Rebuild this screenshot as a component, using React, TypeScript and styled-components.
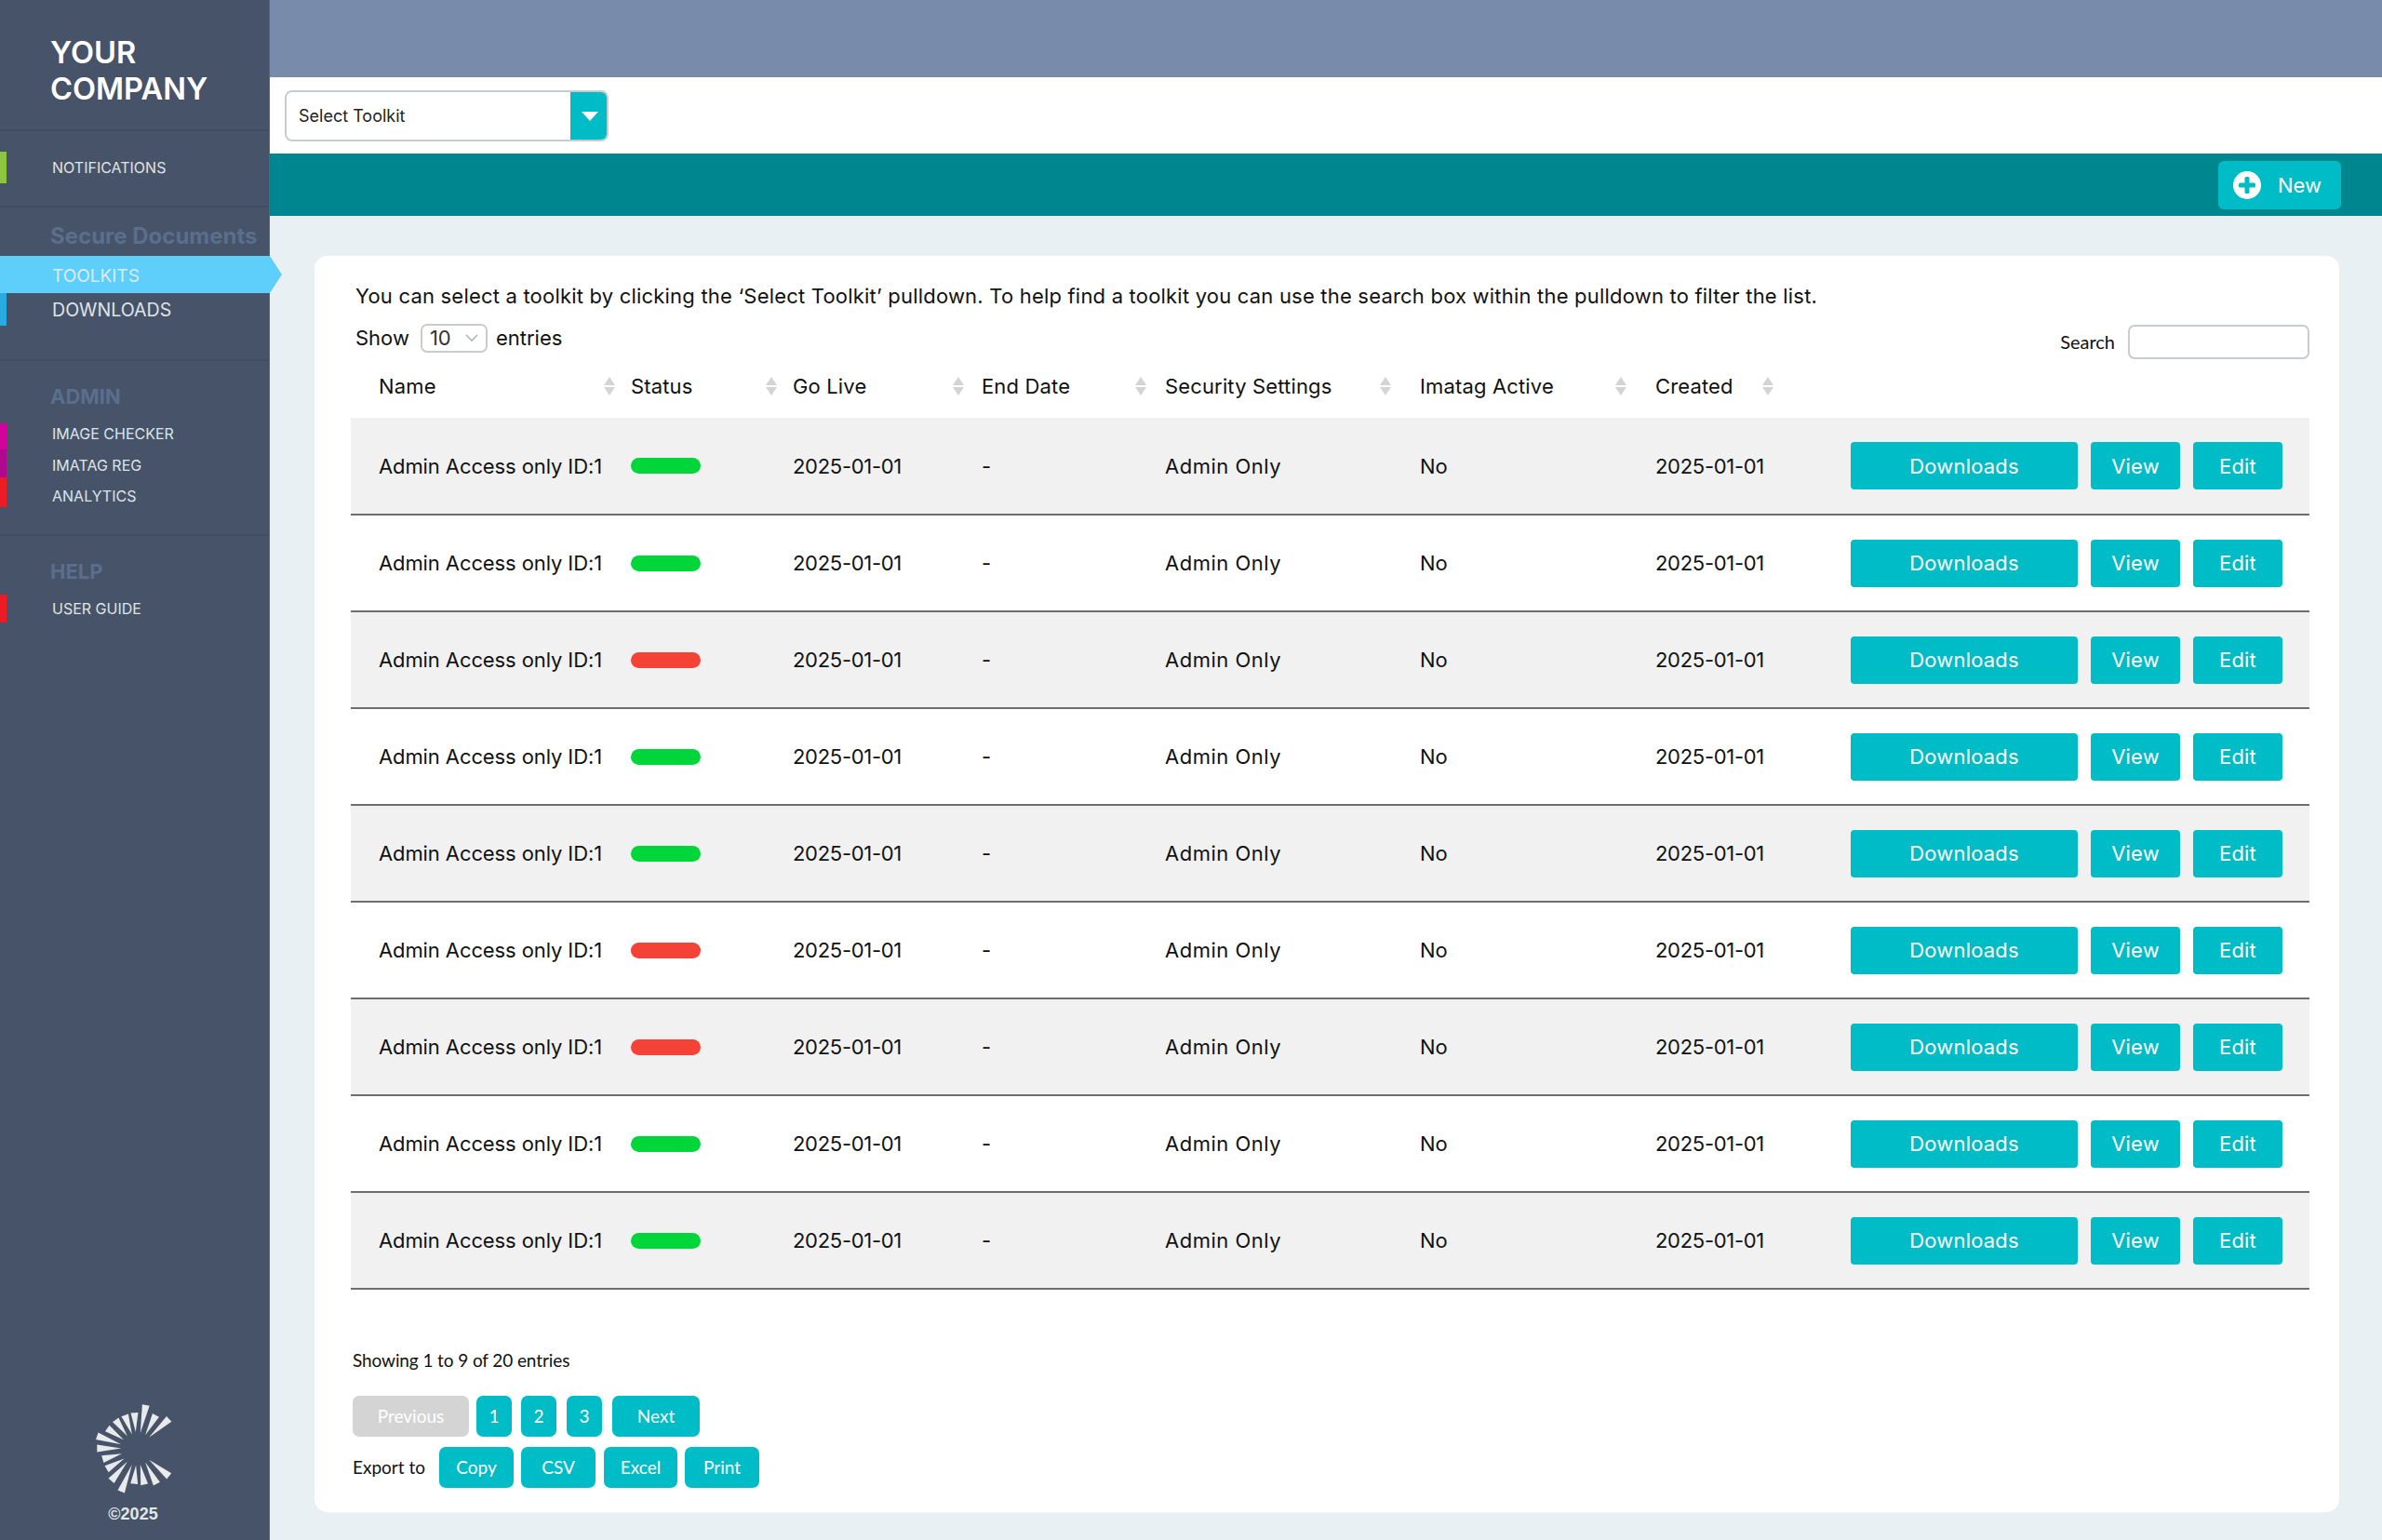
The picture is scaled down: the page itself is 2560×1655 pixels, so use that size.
import React from 'react';
import styled, { createGlobalStyle } from 'styled-components';

const Global = createGlobalStyle`
  html, body { margin: 0; padding: 0; }
  body { font-family: Inter, "Noto Sans", sans-serif; color: #111; background: #e8f0f4; }
  * { box-sizing: border-box; }
`;

const TEAL = '#00bcc6';

const Shell = styled.div`
  display: grid;
  grid-template-columns: 290px 1fr;
  height: 1655px;
  overflow: hidden;
`;

const Sidebar = styled.aside`
  display: flex;
  flex-direction: column;
  background: #465368;
  color: #dfe4ea;
  position: relative;
  z-index: 2;
  border-right: 1px solid #55647e;
`;

const Brand = styled.div`
  height: 141px;
  padding: 37px 0 0 54px;
  font-family: Inter, sans-serif;
  font-weight: 600;
  font-size: 32.6px;
  line-height: 39px;
  color: #fff;
  border-bottom: 2px solid #414d61;
`;

const NavSection = styled.nav<{ $pad: number; $h: number }>`
  height: ${p => p.$h}px;
  padding-top: ${p => p.$pad}px;
  border-bottom: 2px solid #414d61;
`;

const NavHeading = styled.div<{ $gap: number; $size?: number }>`
  height: 30px;
  line-height: 30px;
  padding-left: 54px;
  margin-bottom: ${p => p.$gap}px;
  font-size: ${p => p.$size ?? 24}px;
  font-weight: 700;
  color: #5a6e8d;
  white-space: nowrap;
`;

const NavItem = styled.a<{ $accent?: string; $h: number; $big?: boolean; $top?: number; $bottom?: number }>`
  display: flex;
  align-items: center;
  height: ${p => p.$h}px;
  padding: ${p => p.$top ?? 0}px 0 ${p => p.$bottom ?? 0}px ${p => (p.$accent ? 49 : 56)}px;
  border-left: ${p => (p.$accent ? `7px solid ${p.$accent}` : 'none')};
  font-size: ${p => (p.$big ? 19.6 : 16)}px;
  color: #dfe4ea;
`;

const ActiveItem = styled.a`
  display: flex;
  align-items: center;
  height: 40px;
  width: 290px;
  padding: 2px 0 0 56px;
  position: relative;
  background: #5dcffa;
  color: #dcebf2;
  font-size: 19px;
  &::after {
    content: '';
    position: absolute;
    left: 290px;
    top: 0;
    border-left: 13px solid #5dcffa;
    border-top: 20px solid transparent;
    border-bottom: 20px solid transparent;
  }
`;

const SideFoot = styled.div`
  margin-top: auto;
  padding: 0 3px 18px 0;
  display: flex;
  flex-direction: column;
  align-items: center;
  gap: 9px;
`;

const Copy = styled.div`
  font-family: "Liberation Sans", sans-serif;
  font-weight: 700;
  font-size: 18px;
  line-height: 20px;
  color: #e4e6e8;
`;

const Main = styled.main`
  display: flex;
  flex-direction: column;
  min-width: 0;
`;

const TopBar = styled.div`
  height: 83px;
  background: #788bab;
`;

const ToolkitBar = styled.div`
  height: 82px;
  background: #fff;
  padding: 14px 0 0 16px;
`;

const ToolkitSelect = styled.div`
  display: flex;
  width: 348px;
  height: 55px;
  border: 2px solid #c9cccf;
  border-radius: 8px;
  overflow: hidden;
`;

const ToolkitLabel = styled.div`
  flex: 1;
  display: flex;
  align-items: center;
  padding-left: 13px;
  font-size: 18px;
  color: #222;
`;

const ToolkitCaret = styled.div`
  width: 41px;
  margin: -2px -2px -2px 0;
  background: ${TEAL};
  display: flex;
  align-items: center;
  justify-content: center;
  &::before {
    content: '';
    border-top: 10px solid #fff;
    border-left: 9px solid transparent;
    border-right: 9px solid transparent;
  }
`;

const ActionBar = styled.div`
  height: 67px;
  background: #00868e;
  display: flex;
  justify-content: flex-end;
  align-items: center;
  padding-right: 44px;
`;

const NewButton = styled.button`
  width: 132px;
  height: 52px;
  border: 0;
  border-radius: 6px;
  background: ${TEAL};
  color: #fff;
  font: 400 22px Inter, sans-serif;
  display: flex;
  align-items: center;
  gap: 18px;
  padding: 0 0 0 16px;
`;

const Content = styled.div`
  flex: 1;
  display: flex;
  padding: 43px 46px 30px 48px;
  min-height: 0;
`;

const Card = styled.section`
  flex: 1;
  min-width: 0;
  background: #fff;
  border-radius: 14px;
  padding: 27px 32px 0 39px;
`;

const Intro = styled.p`
  margin: 0;
  height: 32px;
  line-height: 32px;
  padding-left: 5px;
  font-size: 22px;
  letter-spacing: 0.2px;
  white-space: nowrap;
  color: #111;
`;

const Controls = styled.div`
  display: flex;
  justify-content: space-between;
  align-items: flex-start;
  margin-top: 13px;
  height: 38px;
  padding-left: 5px;
`;

const Length = styled.div`
  display: flex;
  align-items: center;
  height: 31px;
  font-size: 22px;
  & > div { margin: 1px 9px 0 12px; }
`;

const LengthSelect = styled.div`
  width: 72px;
  height: 31px;
  border: 2px solid #c9cccf;
  border-radius: 7px;
  padding: 0 8px;
  display: flex;
  align-items: center;
  justify-content: space-between;
  font-size: 22px;
  color: #333;
`;

const SearchBox = styled.label`
  display: flex;
  align-items: center;
  gap: 14px;
  margin-top: 1px;
  font-family: Lato, sans-serif;
  font-size: 20px;
  & > input { margin-top: 1px; }
  line-height: 33px;
`;

const SearchInput = styled.input`
  width: 195px;
  height: 37px;
  border: 2px solid #c9cccf;
  border-radius: 7px;
  background: #fff;
`;

const Table = styled.table`
  width: 100%;
  table-layout: fixed;
  border-collapse: collapse;
  font-size: 22px;
`;

const HeadRow = styled.tr`
  height: 64px;
`;

const Th = styled.th`
  padding: 0 0 4px;
  font-weight: 400;
  text-align: left;
  letter-spacing: 0.15px;
`;

const ThInner = styled.div<{ $gutter: number; $inset?: number }>`
  display: flex;
  align-items: center;
  justify-content: space-between;
  padding-left: ${p => p.$inset ?? 0}px;
  padding-right: ${p => p.$gutter}px;
`;

const Row = styled.tr<{ $shade: boolean }>`
  height: 104px;
  background: ${p => (p.$shade ? '#f1f1f1' : '#fff')};
  border-bottom: 2px solid #6f6f6f;
`;

const Td = styled.td<{ $inset?: number; $track?: number }>`
  padding: 0 0 0 ${p => p.$inset ?? 0}px;
  letter-spacing: ${p => p.$track ?? 0}px;
  white-space: nowrap;
`;

const Pill = styled.span<{ $on: boolean }>`
  display: block;
  width: 75px;
  height: 17px;
  border-radius: 9px;
  background: ${p => (p.$on ? '#00d639' : '#f44336')};
`;

const RowActions = styled.div`
  display: flex;
  gap: 14px;
`;

const RowButton = styled.button<{ $w: number }>`
  width: ${p => p.$w}px;
  height: 51px;
  border: 0;
  border-radius: 4px;
  background: ${TEAL};
  color: #fff;
  font: 400 22px Inter, sans-serif;
  letter-spacing: 0.2px;
`;

const Info = styled.div`
  margin: 62px 0 0 2px;
  line-height: 28px;
  font-family: Lato, sans-serif;
  font-size: 19px;
  letter-spacing: -0.1px;
`;

const ButtonRow = styled.div<{ $top: number }>`
  display: flex;
  align-items: center;
  margin: ${p => p.$top}px 0 0 2px;
`;

const PageButton = styled.button<{ $w: number; $off?: boolean; $gap?: number }>`
  width: ${p => p.$w}px;
  height: 44px;
  margin-right: ${p => p.$gap ?? 10}px;
  border: 0;
  border-radius: 7px;
  background: ${p => (p.$off ? '#d4d4d4' : TEAL)};
  color: #fff;
  font: 400 19px Lato, sans-serif;
  padding: 0 0 2px;
`;

const ExportLabel = styled.span`
  width: 93px;
  font-family: Lato, sans-serif;
  font-size: 19px;
  padding-bottom: 2px;
`;

const HelpSection = styled.nav`
  padding-top: 23px;
`;

const wedges: number[][] = [
  [305, 100, 240, 160], [262, 88, 228, 152], [230, 55, 212, 145], [193, 80, 197, 142],
  [162, 88, 185, 150], [132, 103, 170, 155], [105, 130, 158, 167], [72, 155, 150, 182],
  [72, 195, 150, 195], [90, 230, 152, 212], [103, 262, 160, 228], [118, 300, 170, 238],
  [150, 335, 185, 248], [192, 310, 198, 250], [225, 312, 212, 248], [265, 310, 228, 240],
  [305, 285, 240, 232],
];

const wedgePoints = ([ox, oy, ix, iy]: number[]) => {
  const dx = ox - ix;
  const dy = oy - iy;
  const len = Math.hypot(dx, dy);
  const nx = (-dy / len) * 12;
  const ny = (dx / len) * 12;
  return `${ix},${iy} ${ox + nx},${oy + ny} ${ox - nx},${oy - ny}`;
};

const Logo = () => (
  <svg width="95" height="103" viewBox="47 40 286 310" fill="#e9eaeb">
    {wedges.map((w, i) => <polygon key={i} points={wedgePoints(w)} />)}
  </svg>
);

const PlusCircle = () => (
  <svg width="30" height="30" viewBox="0 0 30 30">
    <circle cx="15" cy="15" r="15" fill="#fff" />
    <rect x="12.5" y="6" width="5" height="18" rx="1.5" fill={TEAL} />
    <rect x="6" y="12.5" width="18" height="5" rx="1.5" fill={TEAL} />
  </svg>
);

const SortIcon = () => (
  <svg width="12" height="20" viewBox="0 0 12 20" fill="#d4d4d4">
    <path d="M6 0 12 9H0ZM6 20 0 11H12Z" />
  </svg>
);

const Chevron = () => (
  <svg width="14" height="9" viewBox="0 0 14 9" fill="none" stroke="#aaa" strokeWidth="1.3">
    <path d="M1 1l6 6 6-6" />
  </svg>
);

const columns = [
  { label: 'Name', w: 301, gutter: 17, inset: 30 },
  { label: 'Status', w: 174, gutter: 17 },
  { label: 'Go Live', w: 203, gutter: 19 },
  { label: 'End Date', w: 197, gutter: 20 },
  { label: 'Security Settings', w: 274, gutter: 31 },
  { label: 'Imatag Active', w: 253, gutter: 31 },
  { label: 'Created', w: 210, gutter: 83 },
];

const rows = [true, true, false, true, true, false, false, true, true];

function NavHelp() {
  return (
    <HelpSection>
      <NavHeading $gap={10} $size={22}>HELP</NavHeading>
      <NavItem $accent="#ed1c24" $h={30}>USER GUIDE</NavItem>
    </HelpSection>
  );
}

export default function App() {
  return (
    <Shell>
      <Global />
      <Sidebar>
        <Brand>YOUR<br />COMPANY</Brand>
        <NavSection $pad={22} $h={82}>
          <NavItem $accent="#8cc63f" $h={34}>NOTIFICATIONS</NavItem>
        </NavSection>
        <NavSection $pad={16} $h={165}>
          <NavHeading $gap={6}>Secure Documents</NavHeading>
          <ActiveItem>TOOLKITS</ActiveItem>
          <NavItem $accent="#29abe2" $h={35} $big>DOWNLOADS</NavItem>
        </NavSection>
        <NavSection $pad={23} $h={188}>
          <NavHeading $gap={14} $size={22}>ADMIN</NavHeading>
          <NavItem $accent="#d4009b" $h={28} $bottom={6}>IMAGE CHECKER</NavItem>
          <NavItem $accent="#b0088f" $h={30} $top={4}>IMATAG REG</NavItem>
          <NavItem $accent="#ed1c24" $h={32} $top={8}>ANALYTICS</NavItem>
        </NavSection>
        <NavHelp />
        <SideFoot>
          <Logo />
          <Copy>©2025</Copy>
        </SideFoot>
      </Sidebar>
      <Main>
        <TopBar />
        <ToolkitBar>
          <ToolkitSelect>
            <ToolkitLabel>Select Toolkit</ToolkitLabel>
            <ToolkitCaret />
          </ToolkitSelect>
        </ToolkitBar>
        <ActionBar>
          <NewButton><PlusCircle />New</NewButton>
        </ActionBar>
        <Content>
          <Card>
            <Intro>You can select a toolkit by clicking the ‘Select Toolkit’ pulldown. To help find a toolkit you can use the search box within the pulldown to filter the list.</Intro>
            <Controls>
              <Length>
                Show
                <LengthSelect>10<Chevron /></LengthSelect>
                entries
              </Length>
              <SearchBox>Search<SearchInput /></SearchBox>
            </Controls>
            <Table>
              <colgroup>
                {columns.map(c => <col key={c.label} style={{ width: c.w }} />)}
                <col />
              </colgroup>
              <thead>
                <HeadRow>
                  {columns.map(c => (
                    <Th key={c.label}>
                      <ThInner $gutter={c.gutter} $inset={c.inset}>{c.label}<SortIcon /></ThInner>
                    </Th>
                  ))}
                  <Th />
                </HeadRow>
              </thead>
              <tbody>
                {rows.map((on, i) => (
                  <Row key={i} $shade={i % 2 === 0}>
                    <Td $inset={30} $track={-0.1}>Admin Access only ID:1</Td>
                    <Td><Pill $on={on} /></Td>
                    <Td $track={-0.3}>2025-01-01</Td>
                    <Td>-</Td>
                    <Td $track={0.5}>Admin Only</Td>
                    <Td>No</Td>
                    <Td $track={-0.3}>2025-01-01</Td>
                    <Td>
                      <RowActions>
                        <RowButton $w={244}>Downloads</RowButton>
                        <RowButton $w={96}>View</RowButton>
                        <RowButton $w={96}>Edit</RowButton>
                      </RowActions>
                    </Td>
                  </Row>
                ))}
              </tbody>
            </Table>
            <Info>Showing 1 to 9 of 20 entries</Info>
            <ButtonRow $top={24}>
              <PageButton $w={125} $off $gap={8}>Previous</PageButton>
              <PageButton $w={38}>1</PageButton>
              <PageButton $w={38} $gap={11}>2</PageButton>
              <PageButton $w={38} $gap={11}>3</PageButton>
              <PageButton $w={94}>Next</PageButton>
            </ButtonRow>
            <ButtonRow $top={11}>
              <ExportLabel>Export to</ExportLabel>
              <PageButton $w={80} $gap={8}>Copy</PageButton>
              <PageButton $w={80} $gap={9}>CSV</PageButton>
              <PageButton $w={79} $gap={8}>Excel</PageButton>
              <PageButton $w={80}>Print</PageButton>
            </ButtonRow>
          </Card>
        </Content>
      </Main>
    </Shell>
  );
}
